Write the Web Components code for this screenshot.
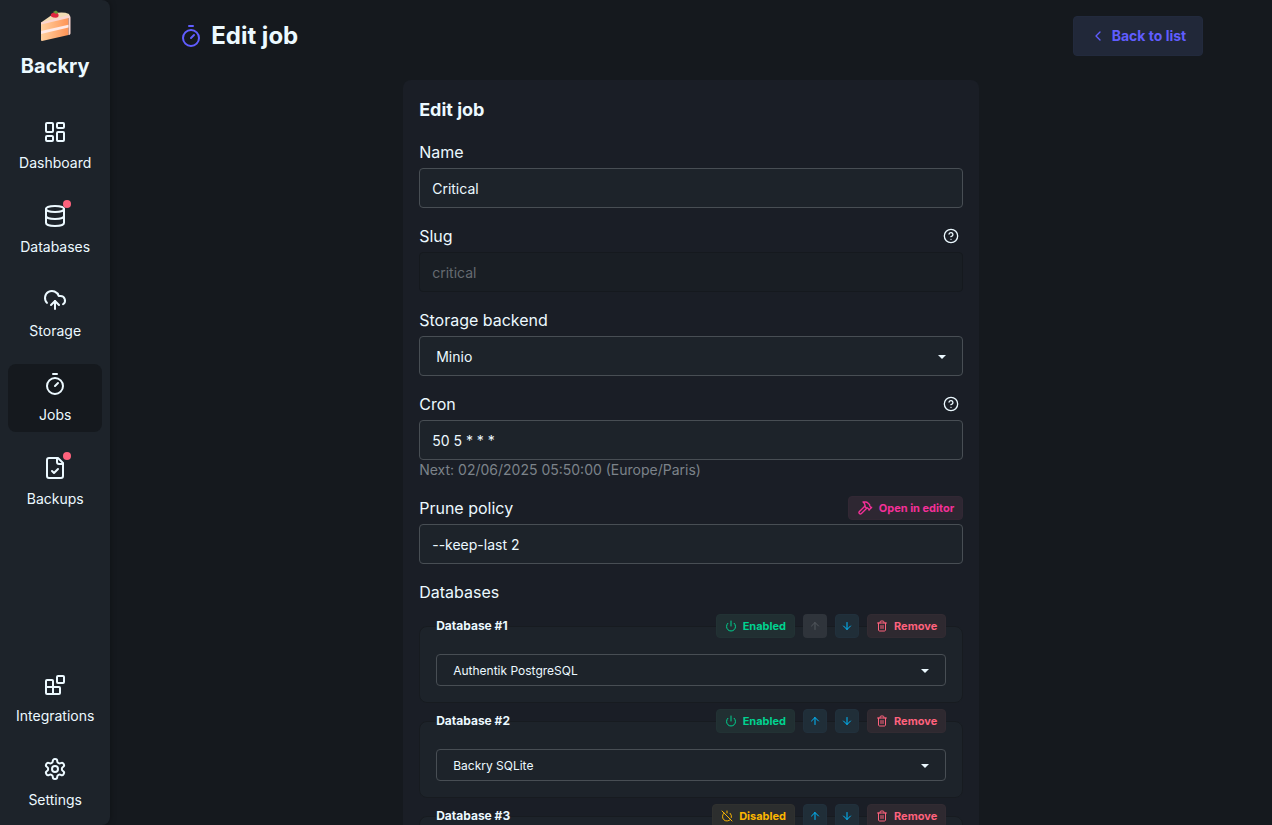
<!DOCTYPE html>
<html lang="en">
<head>
<meta charset="utf-8">
<meta name="viewport" content="width=device-width, initial-scale=1">
<title>Backry - Edit job</title>
<style>
  :root {
    --base-100: #1d232a;
    --base-200: #191e24;
    --base-300: #15191e;
    --card: #1a1e26;
    --content: #ecf9ff;
    --line: #484e54;
    --primary: #605dff;
    --secondary: #f43098;
    --success: #00d390;
    --info: #00bafe;
    --warning: #fcb700;
    --error: #ff627d;
    background: var(--base-300);
    color: var(--content);
    font-family: Inter, "Liberation Sans", sans-serif;
  }
  body { margin: 0; overflow: hidden; }
</style>
</head>
<body>
<backry-app>
  <side-bar slot="nav">
    <nav-item icon="dashboard">Dashboard</nav-item>
    <nav-item icon="database" alert>Databases</nav-item>
    <nav-item icon="cloud">Storage</nav-item>
    <nav-item icon="timer" active>Jobs</nav-item>
    <nav-item icon="file" alert>Backups</nav-item>
    <nav-item icon="blocks" slot="bottom">Integrations</nav-item>
    <nav-item icon="settings" slot="bottom">Settings</nav-item>
  </side-bar>
  <page-header icon="timer">Edit job
    <soft-button slot="action" size="md" tone="primary" icon="chevron">Back to list</soft-button>
  </page-header>
  <form-card heading="Edit job">
    <text-field label="Name" value="Critical"></text-field>
    <text-field label="Slug" value="critical" disabled help></text-field>
    <select-field label="Storage backend" value="Minio"></select-field>
    <text-field label="Cron" value="50 5 * * *" help hint="Next: 02/06/2025 05:50:00 (Europe/Paris)"></text-field>
    <text-field label="Prune policy" value="--keep-last 2">
      <soft-button slot="extra" tone="secondary" icon="hammer" icon-size="16">Open in editor</soft-button>
    </text-field>
    <database-list label="Databases">
      <database-entry heading="Database #1" value="Authentik PostgreSQL" first></database-entry>
      <database-entry heading="Database #2" value="Backry SQLite"></database-entry>
      <database-entry heading="Database #3" value="" off></database-entry>
    </database-list>
  </form-card>
</backry-app>

<script>
const ICONS = {
  dashboard: '<rect width="7" height="9" x="3" y="3" rx="1"/><rect width="7" height="5" x="14" y="3" rx="1"/><rect width="7" height="9" x="14" y="12" rx="1"/><rect width="7" height="5" x="3" y="16" rx="1"/>',
  database: '<ellipse cx="12" cy="5" rx="9" ry="3"/><path d="M3 5V19A9 3 0 0 0 21 19V5"/><path d="M3 12A9 3 0 0 0 21 12"/>',
  cloud: '<path d="M12 13v8"/><path d="M4 14.899A7 7 0 1 1 15.71 8h1.79a4.5 4.5 0 0 1 2.5 8.242"/><path d="m8 17 4-4 4 4"/>',
  timer: '<line x1="10" x2="14" y1="2" y2="2"/><line x1="12" x2="15" y1="14" y2="11"/><circle cx="12" cy="14" r="8"/>',
  file: '<path d="M15 2H6a2 2 0 0 0-2 2v16a2 2 0 0 0 2 2h12a2 2 0 0 0 2-2V7Z"/><path d="M14 2v4a2 2 0 0 0 2 2h4"/><path d="m9 15 2 2 4-4"/>',
  blocks: '<rect width="7" height="7" x="14" y="3" rx="1"/><path d="M10 21V8a1 1 0 0 0-1-1H4a1 1 0 0 0-1 1v12a1 1 0 0 0 1 1h12a1 1 0 0 0 1-1v-5a1 1 0 0 0-1-1H3"/>',
  settings: '<path d="M12.22 2h-.44a2 2 0 0 0-2 2v.18a2 2 0 0 1-1 1.73l-.43.25a2 2 0 0 1-2 0l-.15-.08a2 2 0 0 0-2.73.73l-.22.38a2 2 0 0 0 .73 2.73l.15.1a2 2 0 0 1 1 1.72v.51a2 2 0 0 1-1 1.74l-.15.09a2 2 0 0 0-.73 2.73l.22.38a2 2 0 0 0 2.73.73l.15-.08a2 2 0 0 1 2 0l.43.25a2 2 0 0 1 1 1.73V20a2 2 0 0 0 2 2h.44a2 2 0 0 0 2-2v-.18a2 2 0 0 1 1-1.73l.43-.25a2 2 0 0 1 2 0l.15.08a2 2 0 0 0 2.73-.73l.22-.39a2 2 0 0 0-.73-2.73l-.15-.08a2 2 0 0 1-1-1.74v-.5a2 2 0 0 1 1-1.74l.15-.09a2 2 0 0 0 .73-2.73l-.22-.38a2 2 0 0 0-2.73-.73l-.15.08a2 2 0 0 1-2 0l-.43-.25a2 2 0 0 1-1-1.73V4a2 2 0 0 0-2-2z"/><circle cx="12" cy="12" r="3"/>',
  chevron: '<path d="m15 18-6-6 6-6"/>',
  help: '<circle cx="12" cy="12" r="10"/><path d="M9.09 9a3 3 0 0 1 5.83 1c0 2-3 3-3 3"/><path d="M12 17h.01"/>',
  hammer: '<path d="m15 12-8.373 8.373a1 1 0 1 1-3-3L12 9"/><path d="m18 15 4-4"/><path d="m21.5 11.5-1.914-1.914A2 2 0 0 1 19 8.172V7l-2.26-2.26a6 6 0 0 0-4.202-1.756L9 2.96l.92.82A6.18 6.18 0 0 1 12 8.4V10l2 2h1.172a2 2 0 0 1 1.414.586L18.5 14.5"/>',
  power: '<path d="M12 2v10"/><path d="M18.4 6.6a9 9 0 1 1-12.77.04"/>',
  poweroff: '<path d="M18.36 6.64A9 9 0 0 1 20.77 15"/><path d="M6.16 6.16a9 9 0 1 0 12.68 12.68"/><path d="M12 2v4"/><path d="m2 2 20 20"/>',
  up: '<path d="m5 12 7-7 7 7"/><path d="M12 19V5"/>',
  down: '<path d="M12 5v14"/><path d="m19 12-7 7-7-7"/>',
  trash: '<path d="M3 6h18"/><path d="M19 6v14c0 1-1 2-2 2H7c-1 0-2-1-2-2V6"/><path d="M8 6V4c0-1 1-2 2-2h4c1 0 2 1 2 2v2"/><line x1="10" x2="10" y1="11" y2="17"/><line x1="14" x2="14" y1="11" y2="17"/>'
};
const icon = (name, size) =>
  `<svg width="${size}" height="${size}" viewBox="0 0 24 24" fill="none" stroke="currentColor" stroke-width="2" stroke-linecap="round" stroke-linejoin="round" aria-hidden="true">${ICONS[name]}</svg>`;

const BASE = `*{box-sizing:border-box} svg{display:block;flex:none}`;

class BaseElement extends HTMLElement {
  connectedCallback() {
    if (this.shadowRoot) return;
    const a = name => this.getAttribute(name) || '';
    this.attachShadow({ mode: 'open' }).innerHTML = `<style>${BASE}${this.styles(a)}</style>${this.markup(a)}`;
  }
}

customElements.define('backry-app', class extends BaseElement {
  styles() { return `
    :host{display:flex;height:100vh}
    main{flex:1;min-width:0;overflow:hidden;display:flex;flex-direction:column;align-items:center;gap:24px;padding:16px}`; }
  markup() { return `<slot name="nav"></slot><main><slot></slot></main>`; }
});

customElements.define('side-bar', class extends BaseElement {
  styles() { return `
    :host{display:flex;flex-direction:column;flex:none;box-sizing:border-box;padding:8px;background:var(--base-100);
      border-radius:0 8px 8px 0;box-shadow:0 0 6px rgba(0,0,0,.35)}
    .brand{display:flex;flex-direction:column;align-items:center;gap:8px;color:inherit;text-decoration:none;
      font-size:20px;line-height:28px;font-weight:700;padding-bottom:32px}
    .group{display:flex;flex-direction:column;gap:16px}
    .bottom{margin-top:auto}`; }
  markup() { return `
    <a class="brand" href="#">
      <svg width="36" height="36" viewBox="0 0 36 36" aria-hidden="true">
        <defs>
          <linearGradient id="sponge" x1="0" x2="1"><stop offset="0" stop-color="#ffd09f"/><stop offset="1" stop-color="#ff9456"/></linearGradient>
        </defs>
        <path d="M4 14.500 17 5.500Q26 3.500 32 6L33 9 5 16Z" fill="#f3dcb4"/>
        <path d="M4 15 31.500 8V27L5 33Q4 33 4 32Z" fill="url(#sponge)"/>
        <path d="M4 14.500 30 7.500Q33.500 6.500 33.500 9.500V25.500Q33.300 27 31.500 27V10L4 16.500Z" fill="#fbd5cf"/>
        <path d="M4 23 31.500 16.800V19.500L4 26Z" fill="#ffe9e6"/>
        <path d="M14 6Q17.500 3 21 5.500Q23 9 19 9.800Q12.500 9.500 14 6Z" fill="#e0283f"/>
        <path d="M16 4 19 2.500 21.500 4.500 19 6Z" fill="#6f9a38"/>
      </svg>
      <span>Backry</span>
    </a>
    <nav class="group"><slot></slot></nav>
    <nav class="group bottom"><slot name="bottom"></slot></nav>`; }
});

customElements.define('nav-item', class extends BaseElement {
  styles() { return `
    :host{display:block}
    a{display:flex;flex-direction:column;align-items:center;gap:8px;padding:8px 8px 6px;border-radius:8px;color:inherit;
      text-decoration:none;font-size:14px;line-height:22px}
    :host([active]) a{background:var(--base-300)}
    .icon{position:relative}
    .dot{position:absolute;top:-4px;right:-4px;width:8px;height:8px;border-radius:50%;background:var(--error)}`; }
  markup(a) { return `<a href="#"><span class="icon">${icon(a('icon'), 24)}${this.hasAttribute('alert') ? '<span class="dot"></span>' : ''}</span><span><slot></slot></span></a>`; }
});

customElements.define('page-header', class extends BaseElement {
  styles() { return `
    :host{display:flex;align-items:center;justify-content:space-between;width:100%;max-width:1024px}
    h1{display:flex;align-items:center;gap:8px;margin:0;font-size:24px;line-height:32px;font-weight:700}
    h1 svg{color:var(--primary)}`; }
  markup(a) { return `<h1>${icon(a('icon'), 24)}<span><slot></slot></span></h1><slot name="action"></slot>`; }
});

customElements.define('soft-button', class extends BaseElement {
  styles(a) {
    const tone = a('tone') || 'primary';
    return `
    :host{display:block;flex:none;--tone:var(--${tone})}
    button{display:flex;align-items:center;justify-content:center;gap:6px;height:24px;padding:0 8px;cursor:pointer;
      border:1px solid color-mix(in oklab,var(--tone) 10%,var(--base-100));border-radius:4px;
      background:color-mix(in oklab,var(--tone) 8%,var(--base-100));color:var(--tone);
      font-family:inherit;font-size:11px;line-height:16px;font-weight:700}
    :host([size=md]) button{height:40px;padding:0 16px;font-size:14px}
    :host([square]) button{width:24px;padding:0}
    button:disabled{border-color:transparent;background:#2f343b;color:#53585e;cursor:default}`; }
  markup(a) {
    const name = this.hasAttribute('square') ? ` aria-label="${a('name')}"` : '';
    const off = this.hasAttribute('disabled') ? ' disabled' : '';
    const size = a('icon-size') || (a('size') === 'md' ? 16 : 12);
    return `<button type="button"${name}${off}>${icon(a('icon'), size)}${this.hasAttribute('square') ? '' : '<span><slot></slot></span>'}</button>`; }
});

customElements.define('form-card', class extends BaseElement {
  styles() { return `
    :host{display:block;box-sizing:border-box;flex:none;width:100%;max-width:576px;padding:16px;border-radius:8px;background:var(--card)}
    form{display:flex;flex-direction:column;gap:16px}
    h2{margin:0;font-size:18px;line-height:28px;font-weight:700}`; }
  markup(a) { return `<form><h2>${a('heading')}</h2><slot></slot></form>`; }
});

const FIELD = `
  :host{display:block}
  .top{display:flex;align-items:center;justify-content:space-between;margin-bottom:4px;font-size:16px;line-height:24px}
  .help{display:flex;padding:0 4px;border:0;background:none;color:inherit;cursor:pointer}
  input{display:block;width:100%;height:40px;padding:0 12px;border:1px solid var(--line);border-radius:4px;
    background:var(--base-100);color:inherit;font-family:inherit;font-size:14px;line-height:20px}
  input:disabled{border-color:var(--base-300);background:var(--base-200);color:#666b71}
  .hint{margin:0;font-size:14px;line-height:20px;color:#7c838a}`;

const SELECT = `
  .select{position:relative}
  select{appearance:none;display:block;width:100%;height:40px;padding:2px 16px 0;border:1px solid var(--line);border-radius:4px;
    background:var(--base-100);color:inherit;font-family:inherit;font-size:14px;line-height:20px}
  .select svg{position:absolute;right:17px;top:50%;margin-top:-1px;pointer-events:none}`;
const caret = '<svg width="8" height="4" viewBox="0 0 8 4" aria-hidden="true"><path d="M0 0h8L4 4Z" fill="currentColor"/></svg>';

customElements.define('text-field', class extends BaseElement {
  styles() { return FIELD; }
  markup(a) {
    const help = this.hasAttribute('help') ? `<button type="button" class="help" aria-label="Help">${icon('help', 16)}</button>` : '';
    return `<div class="top"><label for="f">${a('label')}</label>${help}<slot name="extra"></slot></div>
      <input id="f" type="text" value="${a('value')}"${this.hasAttribute('disabled') ? ' disabled' : ''}>
      ${a('hint') ? `<p class="hint">${a('hint')}</p>` : ''}`; }
});

customElements.define('select-field', class extends BaseElement {
  styles() { return FIELD + SELECT; }
  markup(a) { return `<div class="top"><label for="f">${a('label')}</label></div>
    <div class="select"><select id="f"><option>${a('value')}</option></select>${caret}</div>`; }
});

customElements.define('database-list', class extends BaseElement {
  styles() { return `
    :host{display:block}
    .label{margin-bottom:10px;font-size:16px;line-height:24px}
    .list{display:flex;flex-direction:column;gap:6px}`; }
  markup(a) { return `<div class="label">${a('label')}</div><div class="list"><slot></slot></div>`; }
});

customElements.define('database-entry', class extends BaseElement {
  styles() { return SELECT + `
    :host{display:block;position:relative}
    fieldset{min-width:0;margin:0;padding:16px;border:1px solid #171b20;border-radius:8px;background:var(--base-100)}
    legend{padding:0;font-size:12px;line-height:24px;font-weight:700}
    .actions{position:absolute;top:0;right:17px;display:flex;gap:8px}
    select{height:32px;font-size:12px;line-height:16px}`; }
  markup(a) {
    const off = this.hasAttribute('off');
    return `<fieldset><legend>${a('heading')}</legend>
      <div class="select"><select aria-label="${a('heading')}"><option>${a('value')}</option></select>${caret}</div></fieldset>
      <div class="actions">
        <soft-button tone="${off ? 'warning' : 'success'}" icon="${off ? 'poweroff' : 'power'}">${off ? 'Disabled' : 'Enabled'}</soft-button>
        <soft-button tone="info" icon="up" square name="Move up"${this.hasAttribute('first') ? ' disabled' : ''}></soft-button>
        <soft-button tone="info" icon="down" square name="Move down"></soft-button>
        <soft-button tone="error" icon="trash">Remove</soft-button>
      </div>`; }
});
</script>
</body>
</html>
